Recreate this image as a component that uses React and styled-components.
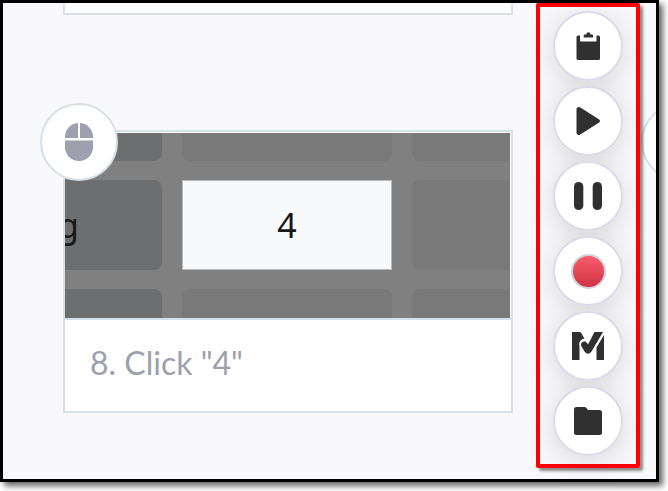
import React from "react";
import styled, { createGlobalStyle, css } from "styled-components";

const GlobalStyle = createGlobalStyle`
  * {
    box-sizing: border-box;
  }
  body {
    margin: 0;
    background-color: #fff;
    font-family: Lato, "Open Sans", sans-serif;
  }
`;

const Frame = styled.main`
  position: relative;
  display: grid;
  grid-template-columns: 1fr 104px;
  column-gap: 23px;
  align-items: start;
  min-height: calc(100vh - 9px);
  margin: 0 9px 9px 0;
  padding: 0 16px 0 60px;
  border: 3px solid #000;
  background-color: #f9f9fc;
  box-shadow: 4px 4px 6px rgba(0, 0, 0, 0.6);
`;

const Steps = styled.div`
  display: flex;
  flex-direction: column;
  gap: 115px;
`;

const cardBox = css`
  border: 2px solid #d6e0e7;
  background-color: #fff;
`;

const CardEnd = styled.div`
  ${cardBox}
  height: 12px;
  border-top: none;
`;

const Card = styled.article`
  ${cardBox}
  position: relative;
`;

const Shot = styled.div`
  display: grid;
  grid-template-columns: 97fr 210fr 98fr;
  grid-template-rows: 28px 90px 29px;
  gap: 19px 20px;
  margin: 1px 1px 0 0;
  background-color: #808080;
  overflow: hidden;
`;

const corners = {
  topLeft: "0 0 8px 0",
  top: "0 0 8px 8px",
  topRight: "0 0 0 8px",
  left: "0 8px 8px 0",
  right: "8px 0 0 8px",
  bottomLeft: "0 8px 0 0",
  bottom: "8px 8px 0 0",
  bottomRight: "8px 0 0 0",
};

const Key = styled.div`
  display: flex;
  align-items: center;
  justify-content: ${({ $align }) => $align || "center"};
  padding: ${({ $padding }) => $padding || "0"};
  border-radius: ${({ $place }) => corners[$place]};
  background-color: ${({ $dark }) => ($dark ? "#6d6e70" : "#797979")};
  color: #17181a;
  font-family: "Noto Sans", sans-serif;
  font-size: 34px;
  line-height: 40px;
  overflow: hidden;
`;

const ActiveKey = styled(Key)`
  border: 1px solid #b8babb;
  border-radius: 0;
  background-color: #f8f9fb;
`;

const Caption = styled.p`
  margin: 0;
  padding: 23px 25px 28px;
  border-top: 2px solid #d6e0e7;
  color: #9fa0ad;
  font-size: 32px;
  line-height: 40px;
`;

const Badge = styled.div`
  position: absolute;
  top: -29px;
  left: -25px;
  display: flex;
  align-items: center;
  justify-content: center;
  width: 78px;
  height: 78px;
  border: 2px solid #d6e0e7;
  border-radius: 50%;
  background-color: #fff;
`;

const NextBadge = styled(Badge)`
  top: 100px;
  left: auto;
  right: -63px;
`;

// keeps the half visible badge inside the frame
const Clip = styled.div`
  position: absolute;
  inset: 0;
  overflow: hidden;
`;

const Rail = styled.nav`
  position: relative;
  display: flex;
  flex-direction: column;
  align-items: center;
  gap: 5px;
  padding: 4px 0 8px;
  border: 4px solid #fe0000;
  border-radius: 2px;
  box-shadow: 3px 3px 3px rgba(0, 0, 0, 0.45);
`;

const RailItem = styled.div`
  border-radius: 50%;
  box-shadow: 0 5px 30px rgba(0, 0, 0, 0.14);
`;

const RailButton = styled.button`
  position: relative;
  display: flex;
  align-items: center;
  justify-content: center;
  width: 70px;
  height: 70px;
  padding: 0;
  border: 2px solid #dadae8;
  border-radius: 50%;
  background-color: #fff;
  color: #303030;
  cursor: pointer;
  z-index: 1;
`;

const RecordDot = styled.span`
  width: 35px;
  height: 35px;
  border: 2px solid #cfd3df;
  border-radius: 50%;
  background: linear-gradient(#fa5d6c, #d03444);
`;

const MouseIcon = () => (
  <svg width="28" height="38" viewBox="0 0 28 38" fill="#9fa0ad" aria-hidden="true">
    <path d="M13 0v15H0v-1C0 6.500 5.500.500 13 0Z" />
    <path d="M15 0v15h13v-1C28 6.500 22.500.500 15 0Z" />
    <path d="M0 17.500h28V24a14 14 0 0 1-28 0Z" />
  </svg>
);

const ClipboardIcon = () => (
  <svg width="28" height="28" viewBox="0 0 28 28" fill="currentColor" aria-hidden="true">
    <path d="M4 3.500H6v6h16.500v-6H24.500q1.500 0 1.500 1.500v21.500q0 1.500-1.500 1.500H4Q2.500 28 2.500 26.500V5q0-1.500 1.500-1.500Z" />
    <path d="M9.700 5.500V3.500q0-1 1-1h1.500q.5-2.200 2.200-2.200t2.200 2.200H18q1 0 1 1v2Z" />
  </svg>
);

const PlayIcon = () => (
  <svg width="28" height="28" viewBox="0 0 28 28" fill="currentColor" aria-hidden="true">
    <path d="M2.500 2.500C2.500.300 4.500-.600 6.300.600l18.500 11.600c1.600 1 1.600 2.600 0 3.600L6.300 27.400c-1.800 1.200-3.800.3-3.800-1.900Z" />
  </svg>
);

const PauseIcon = () => (
  <svg width="28" height="28" viewBox="0 0 28 28" fill="currentColor" aria-hidden="true">
    <rect width="9.300" height="28" rx="4.600" />
    <rect x="18.700" width="9.300" height="28" rx="4.600" />
  </svg>
);

const CheckLogo = () => (
  <svg width="32" height="28" viewBox="0 0 32 28" fill="currentColor" aria-hidden="true">
    <path d="M0 0h8.500l4 6.500C8.500 7 6.500 10.500 7.500 14v14H0Z" />
    <path d="M22.500 0H31L19.500 19.500q-3.500 4.500-7 0L9.500 14.500c-2-4 3-7 5.500-3.500l1 1.500Z" />
    <path d="M32 3v25h-7.500V15.500Z" />
  </svg>
);

const FolderIcon = () => (
  <svg width="28" height="28" viewBox="0 0 28 28" fill="currentColor" aria-hidden="true">
    <path d="M2.500 0h8q1 0 1.700.8L14 3h11.500Q28 3 28 5.500v20q0 2.500-2.500 2.500h-23Q0 28 0 25.500v-23Q0 0 2.500 0Z" />
  </svg>
);

const actions = [
  { label: "Clipboard", icon: <ClipboardIcon /> },
  { label: "Play", icon: <PlayIcon /> },
  { label: "Pause", icon: <PauseIcon /> },
  { label: "Record", icon: <RecordDot /> },
  { label: "Checks", icon: <CheckLogo /> },
  { label: "Files", icon: <FolderIcon /> },
];

const StepCard = () => (
  <Card>
    <Shot>
      <Key $dark $place="topLeft" />
      <Key $place="top" />
      <Key $place="topRight" />
      <Key $dark $place="left" $align="flex-end" $padding="0 83px 0 0">g</Key>
      <ActiveKey>4</ActiveKey>
      <Key $place="right" />
      <Key $dark $place="bottomLeft" />
      <Key $place="bottom" />
      <Key $place="bottomRight" />
    </Shot>
    <Caption>8. Click "4"</Caption>
    <Badge>
      <MouseIcon />
    </Badge>
  </Card>
);

export default function App() {
  return (
    <>
      <GlobalStyle />
      <Frame>
        <Clip>
          <NextBadge />
        </Clip>
        <Steps>
          <CardEnd />
          <StepCard />
        </Steps>
        <Rail>
          {actions.map(({ label, icon }) => (
            <RailItem key={label}>
              <RailButton type="button" aria-label={label}>
                {icon}
              </RailButton>
            </RailItem>
          ))}
        </Rail>
      </Frame>
    </>
  );
}
